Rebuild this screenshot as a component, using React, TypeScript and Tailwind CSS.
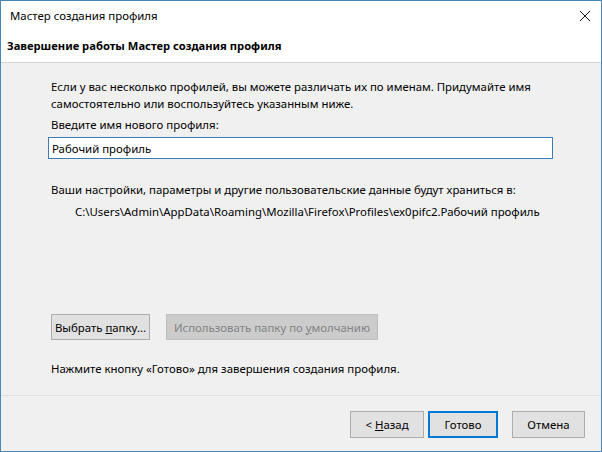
export default function App() {
  const font = { fontFamily: '"Noto Sans", "Open Sans", sans-serif' };
  return (
    <div
      className="w-[602px] h-[452px] flex flex-col border border-[#4a86b8] bg-[#f0f0f0] text-[11.4px] text-black overflow-hidden"
      style={font}
    >
      {/* title + header */}
      <div className="bg-white border-b border-[#d5d5d5]">
        <div className="h-[30px] flex items-center justify-between pl-[9px] pr-[9px]">
          <span>Мастер создания профиля</span>
          <svg width="12" height="12" viewBox="0 0 12 12" className="mr-[1px]">
            <path d="M1 1 L11 11 M11 1 L1 11" stroke="#111" strokeWidth="1" />
          </svg>
        </div>
        <div className="h-[31px] flex items-center pl-[6px] font-bold text-[11.2px]">
          Завершение работы Мастер создания профиля
        </div>
      </div>

      {/* body */}
      <div className="flex-1 pl-[50px] pr-[48px] pt-[15px] leading-[17px]">
        <p>
          Если у вас несколько профилей, вы можете различать их по именам. Придумайте имя
          самостоятельно или воспользуйтесь указанным ниже.
        </p>
        <p className="mt-[4px]">Введите имя нового профиля:</p>
        <div className="mt-[4px] ml-[-3px] w-[505px] h-[22px] bg-white border border-[#3d7bb0] flex items-center pl-[3px]">
          Рабочий профиль
        </div>
        <p className="mt-[22px]">
          Ваши настройки, параметры и другие пользовательские данные будут храниться в:
        </p>
        <p className="mt-[5px] ml-[24px] whitespace-nowrap">
          C:\Users\Admin\AppData\Roaming\Mozilla\Firefox\Profiles\ex0pifc2.Рабочий профиль
        </p>
        <div className="mt-[94px] flex gap-[16px]">
          <button className="h-[26px] w-[99px] border border-[#adadad] bg-[#e1e1e1]">
            Выбрать <span className="underline">п</span>апку...
          </button>
          <button className="h-[26px] w-[212px] border border-[#bfbfbf] bg-[#cccccc] text-[#838383]">
            Использовать папку по <span className="underline">у</span>молчанию
          </button>
        </div>
        <p className="mt-[20px]">Нажмите кнопку «Готово» для завершения создания профиля.</p>
      </div>

      {/* footer */}
      <div className="h-[56px] border-t border-[#dfdfdf] flex justify-end items-start pt-[15px] pr-[16px]">
        <button className="h-[27px] w-[74px] border border-[#adadad] bg-[#e1e1e1]">
          &lt; <span className="underline">Н</span>азад
        </button>
        <button className="ml-[4px] h-[27px] w-[70px] border-2 border-[#0078d7] bg-[#e1e1e1]">
          Готово
        </button>
        <button className="ml-[14px] h-[27px] w-[73px] border border-[#adadad] bg-[#e1e1e1]">
          Отмена
        </button>
      </div>
    </div>
  );
}
